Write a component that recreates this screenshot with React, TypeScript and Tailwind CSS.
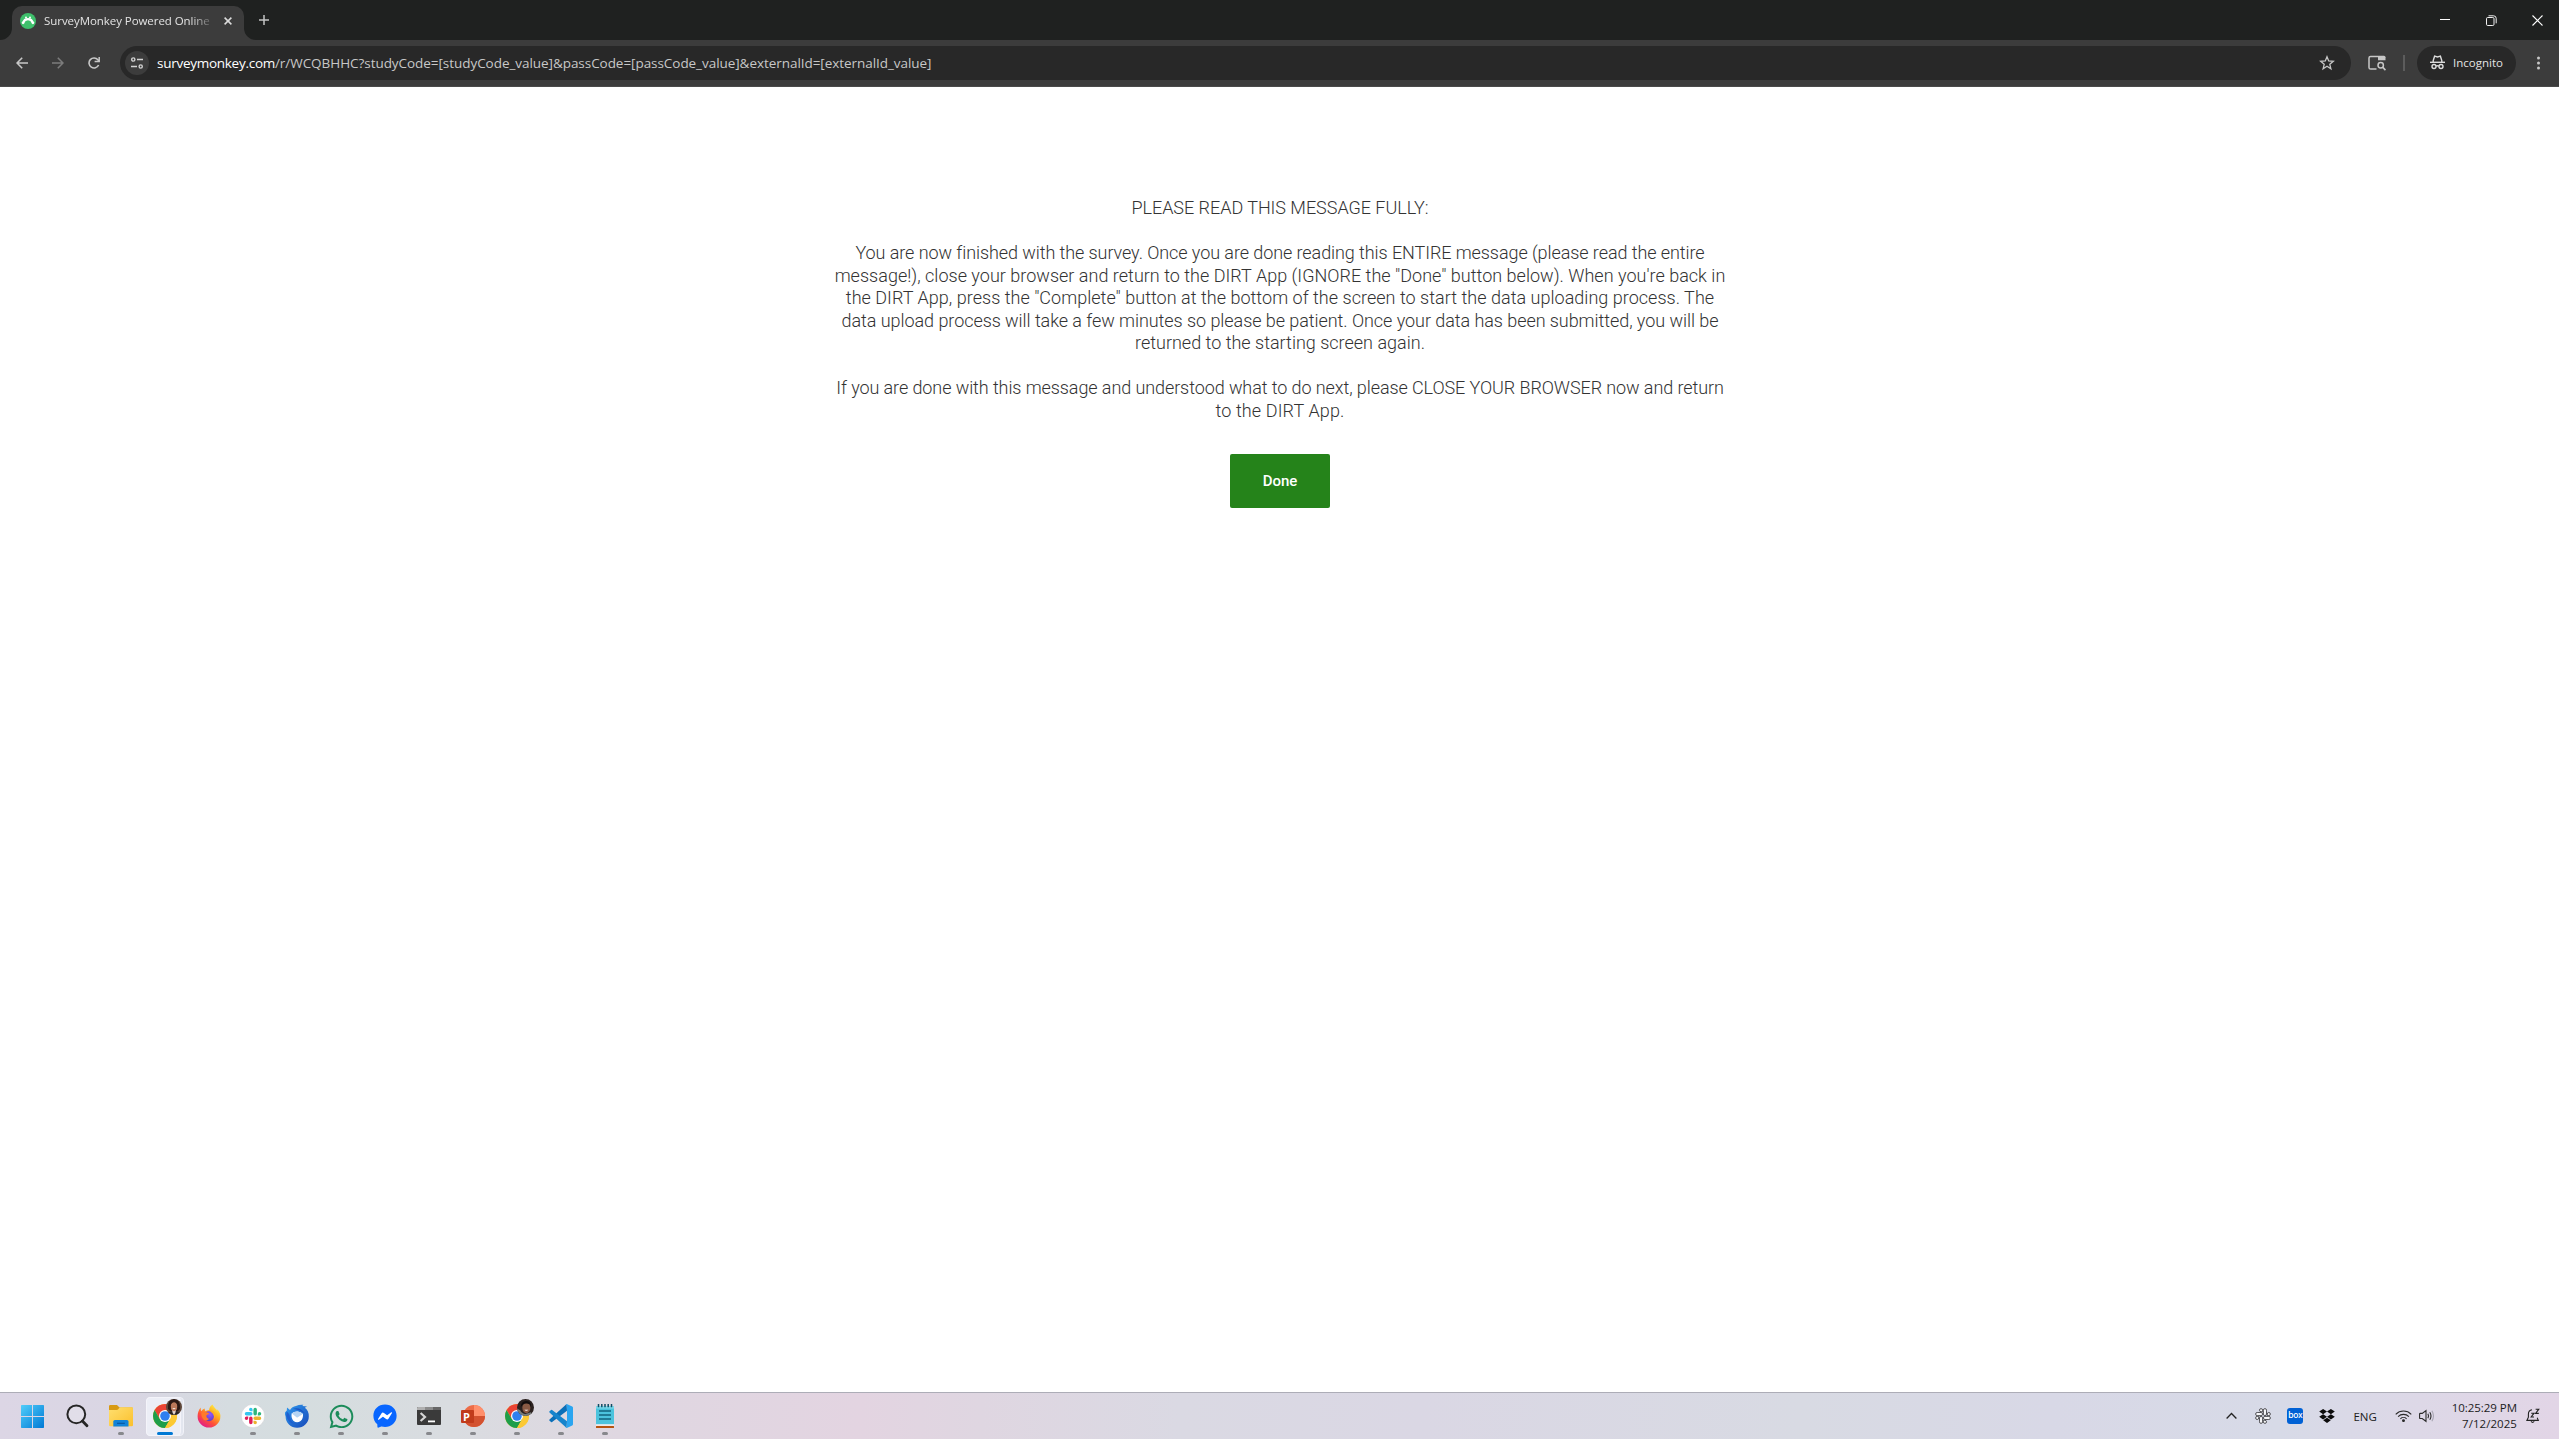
import React from 'react';
import { FaWhatsapp, FaFacebookMessenger } from 'react-icons/fa';

const SLACK_ARM =
  'M5.042 15.165a2.528 2.528 0 0 1-2.52 2.523A2.528 2.528 0 0 1 0 15.165a2.527 2.527 0 0 1 2.522-2.52h2.52v2.52zM6.313 15.165a2.527 2.527 0 0 1 2.521-2.52 2.527 2.527 0 0 1 2.521 2.52v6.313A2.528 2.528 0 0 1 8.834 24a2.528 2.528 0 0 1-2.521-2.522v-6.313z';

function SurveyMonkeyIcon() {
  return (
    <svg className="size-4 shrink-0" viewBox="0 0 16 16">
      <circle cx="8" cy="8" r="8" fill="#3fc06c" />
      <path d="M3.4 9.6A4.7 4.3 0 0 1 12.6 9.6" fill="none" stroke="#fff" strokeWidth="2.2" />
      <circle cx="3.1" cy="9.8" r="1.4" fill="#fff" />
      <circle cx="12.9" cy="9.8" r="1.4" fill="#fff" />
      <circle cx="6" cy="4.6" r="1" fill="#fff" />
      <circle cx="10" cy="4.6" r="1" fill="#fff" />
    </svg>
  );
}

function TabStrip() {
  return (
    <div className="flex h-10 items-end bg-[#1f2120] pl-3">
      <div className="relative flex h-[34px] w-[232px] items-center rounded-t-[10px] bg-[#3c3c3c] pb-[5px] pl-2">
        <svg className="absolute bottom-0 -left-3 size-3" viewBox="0 0 12 12">
          <path d="M12 0V12H0A12 12 0 0 0 12 0Z" fill="#3c3c3c" />
        </svg>
        <svg className="absolute -right-3 bottom-0 size-3" viewBox="0 0 12 12">
          <path d="M0 0V12H12A12 12 0 0 1 0 0Z" fill="#3c3c3c" />
        </svg>
        <SurveyMonkeyIcon />
        <span className="ml-2 w-[166px] overflow-hidden [mask-image:linear-gradient(90deg,#000_88%,transparent_104%)] pt-px text-[11.5px] leading-4 tracking-[-0.06px] whitespace-nowrap text-[#e3e3e3]">
          SurveyMonkey Powered Online
        </span>
        <svg className="ml-3.5 size-2" viewBox="0 0 8 8">
          <path d="M.6 .6L7.4 7.4M7.4 .6L.6 7.4" stroke="#dcdcdc" strokeWidth="1.5" />
        </svg>
      </div>
      <svg className="mb-[15px] ml-[15px] size-2.5" viewBox="0 0 10 10">
        <path d="M5 0V10M0 5H10" stroke="#c4c4c4" strokeWidth="1.5" />
      </svg>
      <div className="ml-auto flex h-10 items-center gap-9 pr-4">
        <svg className="size-2.5" viewBox="0 0 10 10">
          <path d="M0 4.5H10" stroke="#fff" />
        </svg>
        <svg className="-mr-px size-[11px]" viewBox="0 0 11 11" fill="none" stroke="#f0f0f0">
          <rect x=".5" y="2.5" width="7.5" height="8" rx="1.2" />
          <path d="M2.5 .8H7.5Q10.2 .8 10.2 3.4V8.3" />
        </svg>
        <svg className="size-[11px]" viewBox="0 0 11 11">
          <path d="M.5 .5L10.5 10.5M10.5 .5L.5 10.5" stroke="#fff" strokeWidth="1.1" />
        </svg>
      </div>
    </div>
  );
}

function Toolbar() {
  return (
    <div className="flex h-[47px] items-center border-b border-[#4a4a4a] bg-[#3c3c3c] pb-px pl-4 pr-[19px]">
      <svg className="size-3" viewBox="0 0 12 12" fill="none" stroke="#c7c7c7" strokeWidth="1.6">
        <path d="M12 6H1.2M6.2 .7L1 6L6.2 11.3" />
      </svg>
      <svg className="ml-6 size-3" viewBox="0 0 12 12" fill="none" stroke="#7c7c7c" strokeWidth="1.6">
        <path d="M0 6H10.8M5.8 .7L11 6L5.8 11.3" />
      </svg>
      <svg className="ml-6 size-3" viewBox="0 0 12 12">
        <path d="M10.6 8A5 5 0 1 1 9.9 2.8L11 4.2" fill="none" stroke="#c7c7c7" strokeWidth="1.6" />
        <path d="M11.2 0V4.6H6.6" fill="none" stroke="#c7c7c7" strokeWidth="1.5" />
      </svg>
      <div className="ml-5 flex h-[34px] w-[2231px] items-center rounded-full bg-[#282828] pr-4 pl-[5px]">
        <div className="flex size-6 items-center justify-center rounded-full bg-[#3c3c3c]">
          <svg className="size-3" viewBox="0 0 12 12" fill="none" stroke="#d2d2d2" strokeWidth="1.4">
            <circle cx="2.3" cy="2.5" r="1.6" />
            <circle cx="9.7" cy="9.5" r="1.6" />
            <path d="M6 2.5H12M0 9.5H6" />
          </svg>
        </div>
        <span className="ml-2 text-[13.5px] leading-5 tracking-[-0.27px] whitespace-nowrap text-white">surveymonkey.com</span>
        <span className="text-[13.5px] leading-5 tracking-[-0.05px] whitespace-nowrap text-[#c7c7c7]">
          {'/r/WCQBHHC?studyCode=[studyCode_value]&passCode=[passCode_value]&externalId=[externalId_value]'}
        </span>
        <svg className="ml-auto size-4" viewBox="0 0 16 16" fill="none" stroke="#c7c7c7" strokeWidth="1.3">
          <path d="M8 1.8L9.7 6L14.3 6.3L10.8 9.3L11.9 13.8L8 11.3L4.1 13.8L5.2 9.3L1.7 6.3L6.3 6Z" />
        </svg>
      </div>
      <svg className="ml-[17px] h-4 w-[18px]" viewBox="0 0 18 16">
        <path d="M8.5 14H2.6Q1 14 1 12.4V3.1Q1 1.5 2.6 1.5H10" fill="none" stroke="#c7c7c7" strokeWidth="1.5" />
        <path d="M10 .8H16Q17.5 .8 17.5 2.3V5.3H10Z" fill="#c7c7c7" />
        <circle cx="12.7" cy="10.2" r="2.7" fill="none" stroke="#c7c7c7" strokeWidth="1.5" />
        <path d="M14.6 12.2L17.5 15.1" stroke="#c7c7c7" strokeWidth="1.7" />
      </svg>
      <div className="ml-[17px] h-4 w-0.5 bg-[#5c5c5c]" />
      <div className="ml-3 flex h-[34px] w-[99px] items-center rounded-full bg-[#282828] pl-[13px]">
        <svg className="size-[15px]" viewBox="0 0 15 15" fill="none" stroke="#dcdcdc" strokeWidth="1.4">
          <path d="M0 7.3H15" />
          <path d="M3.2 7V5.6L4.6 1.2L7.5 2L10.4 1.2L11.8 5.6V7" />
          <circle cx="4" cy="11.5" r="2" />
          <circle cx="11" cy="11.5" r="2" />
          <path d="M6 11.2Q7.5 10.4 9 11.2" />
        </svg>
        <span className="ml-2 text-[11.5px] leading-4 text-[#e3e3e3]">Incognito</span>
      </div>
      <svg className="ml-auto h-3.5 w-[3px]" viewBox="0 0 3 14" fill="#c7c7c7">
        <circle cx="1.5" cy="2" r="1.5" />
        <circle cx="1.5" cy="7" r="1.5" />
        <circle cx="1.5" cy="12" r="1.5" />
      </svg>
    </div>
  );
}

function Survey() {
  return (
    <main className="flex flex-1 flex-col items-center bg-white pt-[110px] pl-px font-['Roboto',sans-serif] text-[18px] leading-[22.5px] font-light whitespace-nowrap text-[#333]">
      <p className="mb-[22.5px] tracking-[-0.03px]">PLEASE READ THIS MESSAGE FULLY:</p>
      <div className="mb-[22.5px] flex flex-col items-center">
        <p className="tracking-[-0.08px]">
          You are now finished with the survey. Once you are done reading this ENTIRE message (please read the entire
        </p>
        <p className="tracking-[0.015px]">
          message!), close your browser and return to the DIRT App (IGNORE the "Done" button below). When you're back in
        </p>
        <p className="tracking-[0.025px]">
          the DIRT App, press the "Complete" button at the bottom of the screen to start the data uploading process. The
        </p>
        <p className="tracking-[-0.06px]">
          data upload process will take a few minutes so please be patient. Once your data has been submitted, you will be
        </p>
        <p>returned to the starting screen again.</p>
      </div>
      <div className="flex flex-col items-center">
        <p className="tracking-[-0.09px]">
          If you are done with this message and understood what to do next, please CLOSE YOUR BROWSER now and return
        </p>
        <p className="tracking-[0.12px]">to the DIRT App.</p>
      </div>
      <button className="mt-8 h-[54px] w-[100px] rounded-xs bg-[#25831a] pb-px text-[15px] leading-5 font-medium text-white">
        Done
      </button>
    </main>
  );
}

function ChromeIcon() {
  return (
    <svg className="size-6" viewBox="0 0 24 24">
      <circle cx="12" cy="12" r="12" fill="#fcc934" />
      <path d="M12 12L6.8 15L1.61 6A12 12 0 0 1 22.39 6H12Z" fill="#ea4335" />
      <path d="M1.61 6A12 12 0 0 0 12 24L17.2 15L12 12L6.8 15Z" fill="#1e9e4a" />
      <path d="M22.39 6H12V12L17.2 15L12 24A12 12 0 0 0 22.39 6Z" fill="#fcc934" />
      <circle cx="12" cy="12" r="6" fill="#fff" />
      <circle cx="12" cy="12" r="4.8" fill="#2f7ff0" />
    </svg>
  );
}

function AvatarOne() {
  return (
    <svg className="absolute -top-[5px] left-[13px] size-4" viewBox="0 0 16 16">
      <defs>
        <clipPath id="avatar-one">
          <circle cx="8" cy="8" r="8" />
        </clipPath>
      </defs>
      <g clipPath="url(#avatar-one)">
        <rect width="16" height="16" fill="#5d4639" />
        <path d="M2 10Q1.5 0 8 0Q14.5 0 14 10L12 12H4Z" fill="#2a1915" />
        <path d="M1 16Q3 11.5 8 12Q13 11.5 15 16Z" fill="#2b2525" />
        <path d="M6 11H10L9.3 14L8 16L6.7 14Z" fill="#e4d4cc" />
        <ellipse cx="8" cy="7.6" rx="3.2" ry="4.6" fill="#b9785a" />
        <path d="M6.3 9.3Q8 11 9.7 9.3Z" fill="#fff" />
        <path d="M4.6 6.2Q5.5 3 8.3 3.2Q10.8 3.3 11.4 6.2L12 2L8 .8L4.3 2Z" fill="#2a1915" />
      </g>
    </svg>
  );
}

function AvatarTwo() {
  return (
    <svg className="absolute -top-[5px] left-3 size-[17px]" viewBox="0 0 16 16">
      <defs>
        <clipPath id="avatar-two">
          <circle cx="8" cy="8" r="8" />
        </clipPath>
      </defs>
      <g clipPath="url(#avatar-two)">
        <rect width="16" height="16" fill="#2b211f" />
        <path d="M0 16V9L3 10.5Q5 14 8 14L13 12.5L16 16Z" fill="#777b78" />
        <ellipse cx="8.8" cy="8.3" rx="3.8" ry="5" fill="#8a5a44" />
        <path d="M3.5 7.5Q4 1.5 9 1.8Q13.8 2.2 13.2 7.5L12 5Q8.4 3.4 5.4 5.3Z" fill="#120d0d" />
        <path d="M6.9 10Q8.8 12 10.7 10Z" fill="#fff" />
      </g>
    </svg>
  );
}

function WindowsIcon() {
  return (
    <svg className="-ml-px size-[23px]" viewBox="0 0 23 23">
      <defs>
        <linearGradient id="win" x1="0" y1="0" x2="1" y2="1">
          <stop offset="0" stopColor="#50cdfa" />
          <stop offset="1" stopColor="#0079d5" />
        </linearGradient>
      </defs>
      <path d="M0 .7Q0 0 .7 0H11V11H0ZM12 0H22.3Q23 0 23 .7V11H12ZM0 12H11V23H.7Q0 23 0 22.3ZM12 12H23V22.3Q23 23 22.3 23H12Z" fill="url(#win)" />
    </svg>
  );
}

function SearchIcon() {
  return (
    <svg className="-ml-px size-6" viewBox="0 0 24 24" fill="none" stroke="#262626">
      <circle cx="11.3" cy="10.3" r="8.9" strokeWidth="2" fill="#e6e3ec" fillOpacity=".6" />
      <path d="M17.4 17L22 21.8" strokeWidth="2.8" strokeLinecap="round" />
    </svg>
  );
}

function ExplorerIcon() {
  return (
    <svg className="size-6" viewBox="0 0 24 24">
      <defs>
        <linearGradient id="folder" x1="0" y1="0" x2="1" y2="1">
          <stop offset="0" stopColor="#ffdf70" />
          <stop offset="1" stopColor="#fbc02c" />
        </linearGradient>
      </defs>
      <path d="M0 2.2Q0 1 1.2 1H8L10.5 3.5H22.8Q24 3.5 24 4.7V10H0Z" fill="#d89a13" />
      <path d="M0 6H7.5Q8.8 6 9.4 5Q10 3.6 11.6 3.2H22.8Q24 3.2 24 4.4V21Q24 22.3 22.8 22.3H1.2Q0 22.3 0 21Z" fill="url(#folder)" />
      <path d="M4.3 22.4V17.6Q4.3 16 5.9 16H18Q19.5 16 19.5 17.6V22.4Z" fill="#1283d8" />
      <path d="M8 18.7H15.8V20H8Z" fill="#0a5ba6" />
    </svg>
  );
}

function FirefoxIcon() {
  return (
    <svg className="size-6" viewBox="0 0 24 24">
      <defs>
        <linearGradient id="ff" x1=".85" y1=".05" x2=".2" y2=".95">
          <stop offset="0" stopColor="#fff14a" />
          <stop offset=".35" stopColor="#ffab1f" />
          <stop offset=".65" stopColor="#ff5137" />
          <stop offset="1" stopColor="#e01a8c" />
        </linearGradient>
        <radialGradient id="ffglobe" cx=".6" cy=".3" r=".8">
          <stop offset="0" stopColor="#9059ff" />
          <stop offset="1" stopColor="#5b38b8" />
        </radialGradient>
      </defs>
      <path
        d="M22.5 8.6C22 7 20.7 5.7 19.7 5.2C20.2 6.2 20.4 7.1 20.5 7.8C19.3 4.3 16.3 3.3 15.7 .5C12.6 2 12.2 5 12.2 6C10.5 6 9.3 6.8 8.6 7.2C7.7 6.4 7.7 5.2 7.8 4.6C6.3 5.1 5.2 6.2 4.4 7.2C3.6 6.6 3.7 4.6 3.8 3.6C1.8 5.4 .6 9.3 .6 12.2A11.4 11.4 0 0 0 23.4 12.2C23.5 11 23.1 9.5 22.5 8.6Z"
        fill="url(#ff)"
      />
      <circle cx="12" cy="12.3" r="5" fill="url(#ffglobe)" />
      <path d="M4.4 8.5Q8 7 12 9.2L12 10C11 11 9.5 10.5 9.3 12Q9.2 14.2 12 15Q10 17.3 7 16Q4 13 4.4 8.5Z" fill="#ff7a2a" />
      <path d="M12.2 6Q16.5 6.2 18 10Q18.6 13.5 16.7 15.8Q18 10.5 14.5 8.4Z" fill="#ffb01f" />
    </svg>
  );
}

function SlackIcon() {
  return (
    <svg className="size-6" viewBox="0 0 48 48">
      <circle cx="24" cy="24" r="23.5" fill="#fff" stroke="#c9c9cc" strokeWidth="1" />
      <g transform="translate(7.5 7.5) scale(1.375)">
        <path d={SLACK_ARM} fill="#e01e5a" />
        <path d={SLACK_ARM} fill="#36c5f0" transform="rotate(90 12 12)" />
        <path d={SLACK_ARM} fill="#2eb67d" transform="rotate(180 12 12)" />
        <path d={SLACK_ARM} fill="#ecb22e" transform="rotate(270 12 12)" />
      </g>
    </svg>
  );
}

function ThunderbirdIcon() {
  return (
    <svg className="size-6" viewBox="0 0 24 24">
      <defs>
        <linearGradient id="tb" x1="0" y1="0" x2="1" y2="1">
          <stop offset="0" stopColor="#2f9bf0" />
          <stop offset="1" stopColor="#1748b8" />
        </linearGradient>
      </defs>
      <path
        d="M0 8.6L1.8 6.4L2 3.4L5 6Q7 2.6 11 2Q14 .4 18.4 .8L17.3 2L22 2.4L19.8 3.8Q23.8 6.4 23.8 12.4A11.6 11.4 0 0 1 12 23.8A11.4 11.4 0 0 1 .6 12.5L0 10.5Z"
        fill="url(#tb)"
      />
      <path d="M6.6 9.5Q9 7.2 12.5 7.4Q16 7.4 18 10Q18.4 14.5 15.6 17Q12 19.6 8.6 17Q6 14 6.6 9.5Z" fill="#fff" />
      <path d="M6.8 9.6L11.5 13.2Q12.2 13.6 12.9 13.2L17.8 10Q16 7.6 12.5 7.5Q9 7.4 6.8 9.6Z" fill="#b5d4f3" />
      <path d="M1.6 7.6Q5 10 5 13.6Q6 18 10 20Q3 19 1.2 12Z" fill="#1d5fd0" />
      <path d="M8 4.8Q15 2.6 20 9.5Q14.5 5.6 8 4.8Z" fill="#1a55c4" />
    </svg>
  );
}

function MessengerIcon() {
  return (
    <span className="relative flex size-6 items-center justify-center">
      <span className="absolute top-1.5 left-1 h-3 w-4 bg-white" />
      <FaFacebookMessenger className="relative size-6 text-[#0866ff]" />
    </span>
  );
}

function TerminalIcon() {
  return (
    <svg className="size-6" viewBox="0 0 24 24">
      <rect y="3" width="24" height="18" rx="1" fill="#3a3a3a" />
      <path d="M0 4Q0 3 1 3H8V6H0Z" fill="#b0b0b0" />
      <path d="M8 3H16V6H8Z" fill="#8b8b8b" />
      <path d="M16 3H23Q24 3 24 4V6H16Z" fill="#666" />
      <path d="M3.6 9L8 13L3.6 17" fill="none" stroke="#d5d5d5" strokeWidth="2.2" />
      <path d="M11 17.4H18" stroke="#fff" strokeWidth="1.8" />
    </svg>
  );
}

function PowerPointIcon() {
  return (
    <span className="relative flex size-6 items-center">
      <svg className="absolute inset-0 size-6" viewBox="0 0 24 24">
        <circle cx="13" cy="12" r="11" fill="#ed6c47" />
        <path d="M13 1A11 11 0 0 1 24 12H13Z" fill="#ff8f6b" />
        <path d="M2 12A11 11 0 0 0 24 12Z" fill="#d35230" />
        <rect y="6" width="13" height="13" rx="1" fill="#c13b1b" />
      </svg>
      <span className="relative flex w-[11px] justify-center font-['Open_Sans',sans-serif] text-[11px] leading-none font-bold text-white">P</span>
    </span>
  );
}

function VSCodeIcon() {
  return (
    <svg className="size-6" viewBox="0 0 24 24">
      <path d="M17.6 0L.5 15.6Q0 16.1 .5 16.7L2.1 18.1Q2.6 18.5 3.1 18.1L18 6.8Z" fill="#0b6fb8" />
      <path d="M17.6 24L.5 8.4Q0 7.9 .5 7.3L2.1 5.9Q2.6 5.5 3.1 5.9L18 17.2Z" fill="#1684cc" />
      <path d="M17.6 .1Q17.9 0 18.3 .2L23.2 2.5Q24 2.9 24 3.8V20.2Q24 21.1 23.2 21.5L18.3 23.8Q17.2 24.2 16.6 23.4Q18 23.8 18 22.2V1.8Q18 .2 16.6 .6Z" fill="#2aa5f0" />
    </svg>
  );
}

function NotepadIcon() {
  return (
    <svg className="size-6" viewBox="0 0 24 24">
      <rect x="3" y="21.8" width="18" height="2.2" rx=".6" fill="#b65410" />
      <rect x="3" y="20.2" width="18" height="1.6" fill="#f4f4f4" />
      <path d="M3 2H21V20.2H3Z" fill="#4cc3dd" />
      <path d="M3 2H21V4.6H3Z" fill="#7bd8ea" />
      <path d="M5.5 0V3.2M8.8 0V3.2M12 0V3.2M15.2 0V3.2M18.5 0V3.2" stroke="#124c63" strokeWidth="1.5" />
      <path d="M6 7H18M6 11H18M6 15H18" stroke="#12647e" strokeWidth="1.4" />
    </svg>
  );
}

function TaskItem({ children, running = false, active = false }: { children: React.ReactNode; running?: boolean; active?: boolean }) {
  return (
    <div className="relative flex h-[46px] w-11 items-center justify-center">
      {active && (
        <>
          <span className="absolute top-1 left-[3px] h-[39px] w-[38px] rounded-[4px] border border-[#f1f2f8] bg-[#e3e6ef]" />
          <span className="absolute top-1 left-[3px] h-[39px] w-[35px] rounded-[4px] border border-[#f4f4fa] bg-[#eceef6]" />
        </>
      )}
      <div className="relative">{children}</div>
      {running && <span className="absolute bottom-1 left-[19px] h-[3px] w-1.5 rounded-full bg-[#87888c]" />}
      {active && <span className="absolute bottom-1 left-[14px] h-[3px] w-4 rounded-full bg-[#0078d4]" />}
    </div>
  );
}

function Tray() {
  return (
    <div className="ml-auto flex h-full items-center pr-[19px] text-[#1c1c1c]">
      <svg className="h-2 w-[11px]" viewBox="0 0 11 8" fill="none" stroke="#222" strokeWidth="1.3">
        <path d="M.6 6.5L5.5 1.5L10.4 6.5" />
      </svg>
      <svg className="ml-[18px] size-4" viewBox="-1 -1 26 26" fill="#f6f6f8" stroke="#3c3c40" strokeWidth="1.4">
        <path d={SLACK_ARM} />
        <path d={SLACK_ARM} transform="rotate(90 12 12)" />
        <path d={SLACK_ARM} transform="rotate(180 12 12)" />
        <path d={SLACK_ARM} transform="rotate(270 12 12)" />
      </svg>
      <span className="ml-4 flex size-4 items-center justify-center rounded-[3px] bg-[#0061d5] pb-px font-['Inter',sans-serif] text-[8.5px] leading-none font-medium tracking-[-0.3px] text-white">
        box
      </span>
      <svg className="ml-4 size-4" viewBox="0 0 16 16" fill="#0c0c0c">
        <path d="M4.1 1L8 3.6L4.1 6.2L.2 3.6ZM11.9 1L15.8 3.6L11.9 6.2L8 3.6ZM4.1 6.2L8 8.8L4.1 11.4L.2 8.8ZM11.9 6.2L15.8 8.8L11.9 11.4L8 8.8ZM8 9.8L11.8 12.3L8 14.9L4.2 12.3Z" />
      </svg>
      <span className="ml-[18px] pt-px text-[11.5px] leading-4">ENG</span>
      <svg className="ml-[18px] h-3 w-[17px]" viewBox="0 0 17 12" fill="none" stroke="#2a2a2a" strokeWidth="1.1">
        <path d="M.7 4.3A11 11 0 0 1 16.3 4.3" />
        <path d="M3.1 6.6A7.6 7.6 0 0 1 13.9 6.6" />
        <path d="M5.4 8.8A4.4 4.4 0 0 1 11.6 8.8" />
        <circle cx="8.5" cy="10.6" r=".9" fill="#2a2a2a" />
      </svg>
      <svg className="ml-[7px] h-3.5 w-4" viewBox="0 0 16 14" fill="none" stroke="#2a2a2a" strokeWidth="1.1">
        <path d="M.6 5Q.6 4.4 1.2 4.4H3.2L7 1.5V12.3L3.2 9.5H1.2Q.6 9.5 .6 8.9Z" />
        <path d="M8.9 4.8Q10.2 7 8.9 9.2" />
        <path d="M10.8 3.2Q13.2 7 10.8 10.8" />
        <path d="M12.9 1.8Q16.1 7 12.9 12.2" stroke="#a9a7b4" />
      </svg>
      <div className="ml-[17px] text-right text-[11.5px] leading-4">
        <p className="tracking-[-0.05px]">10:25:29 PM</p>
        <p className="tracking-[0.05px]">7/12/2025</p>
      </div>
      <svg className="ml-[9px] h-4 w-3.5" viewBox="0 0 14 16" fill="none" stroke="#222" strokeWidth="1.1">
        <path d="M6 1.8Q2.4 2.4 2.4 6.2V9.2L.9 12.4H12.3L11.2 9.8" />
        <path d="M5 13.2Q6.6 15.6 8.2 13.2" />
        <path d="M5.2 5.2H8L5.2 9H8M9.6 1.2H12.8L9.6 5.4H12.8" />
      </svg>
    </div>
  );
}

function Taskbar() {
  return (
    <footer className="flex h-[47px] items-center border-t border-[#adadb7] bg-[linear-gradient(90deg,#dcd6e5_0px,#d9d6e3_130px,#d5dce0_230px,#d5dddf_300px,#d9dce0_450px,#dfd7e1_620px,#e3d4e1_860px,#dfd6e1_980px,#dad9e3_1180px,#dad7e4_1420px,#d8dae3_1800px,#d8d8e6_2050px,#d7dae7_2280px,#ddd8e7_2420px,#e2d5e6_2559px)] pl-[11px]">
      <TaskItem><WindowsIcon /></TaskItem>
      <TaskItem><SearchIcon /></TaskItem>
      <TaskItem running><ExplorerIcon /></TaskItem>
      <TaskItem active>
        <ChromeIcon />
        <AvatarOne />
      </TaskItem>
      <TaskItem><FirefoxIcon /></TaskItem>
      <TaskItem running><SlackIcon /></TaskItem>
      <TaskItem running><ThunderbirdIcon /></TaskItem>
      <TaskItem running><FaWhatsapp className="size-[27px] text-[#1c8c5a]" /></TaskItem>
      <TaskItem running><MessengerIcon /></TaskItem>
      <TaskItem running><TerminalIcon /></TaskItem>
      <TaskItem running><PowerPointIcon /></TaskItem>
      <TaskItem running>
        <ChromeIcon />
        <AvatarTwo />
      </TaskItem>
      <TaskItem running><VSCodeIcon /></TaskItem>
      <TaskItem running><NotepadIcon /></TaskItem>
      <Tray />
    </footer>
  );
}

export default function App() {
  return (
    <div className="flex h-screen w-full flex-col overflow-hidden font-['Open_Sans','Noto_Sans',sans-serif]">
      <TabStrip />
      <Toolbar />
      <Survey />
      <Taskbar />
    </div>
  );
}
